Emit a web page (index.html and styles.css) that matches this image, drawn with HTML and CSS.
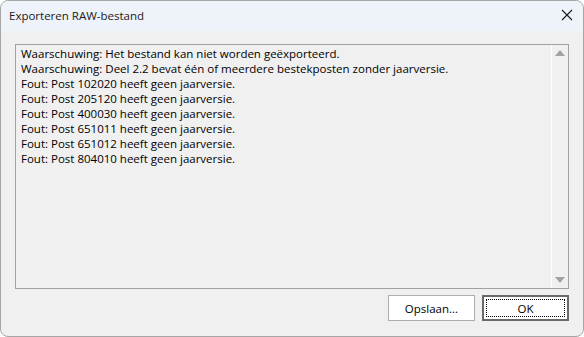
FILE: index.html
```html
<!DOCTYPE html>
<html>
<head>
  <title>Exporteren RAW-bestand</title>
  <link rel="stylesheet" href="styles.css">
</head>
<body>

  <div class="window">
    <div class="titlebar">
      <span class="title">Exporteren RAW-bestand</span>
      <span class="close">
        <svg width="12" height="12" viewBox="0 0 12 12">
          <path d="M1 1 L11 11 M11 1 L1 11" stroke="#1a1a1a" stroke-width="1.1" fill="none"/>
        </svg>
      </span>
    </div>

    <div class="content">
      <div class="log">
        <div class="log-lines">
          <div>Waarschuwing: Het bestand kan niet worden geëxporteerd.</div>
          <div>Waarschuwing: Deel 2.2 bevat één of meerdere bestekposten zonder jaarversie.</div>
          <div>Fout: Post 102020 heeft geen jaarversie.</div>
          <div>Fout: Post 205120 heeft geen jaarversie.</div>
          <div>Fout: Post 400030 heeft geen jaarversie.</div>
          <div>Fout: Post 651011 heeft geen jaarversie.</div>
          <div>Fout: Post 651012 heeft geen jaarversie.</div>
          <div>Fout: Post 804010 heeft geen jaarversie.</div>
        </div>
        <div class="scrollbar">
          <span class="arrow up"></span>
          <span class="arrow down"></span>
        </div>
      </div>

      <div class="buttons">
        <button class="btn">Opslaan...</button>
        <button class="btn default"><span class="focus">OK</span></button>
      </div>
    </div>
  </div>

</body>
</html>
```

FILE: styles.css
```css
html, body {
  margin: 0;
  padding: 0;
  background: #ffffff;
}

body {
  font-family: "Open Sans", "Noto Sans", sans-serif;
  font-size: 11.5px;
  color: #000;
}

.window {
  width: 584px;
  height: 337px;
  box-sizing: border-box;
  border: 1px solid #a6a6a6;
  border-radius: 8px;
  background: #f0f0f0;
  overflow: hidden;
  display: flex;
  flex-direction: column;
}

.titlebar {
  height: 30px;
  background: #eef2f9;
  display: flex;
  align-items: center;
  justify-content: space-between;
  padding: 0 9px 0 8px;
  flex-shrink: 0;
}

.title {
  color: #1a1a1a;
  font-size: 11.5px;
  margin-top: -2px;
}

.close {
  display: flex;
  margin-right: 1px;
  margin-top: -2px;
}

.content {
  flex: 1;
  padding: 13px 14px 15px 14px;
  display: flex;
  flex-direction: column;
  gap: 6px;
}

.log {
  height: 245px;
  box-sizing: border-box;
  border: 1px solid #a0a0a0;
  background: #f0f0f0;
  display: flex;
}

.log-lines {
  flex: 1;
  padding: 1px 5px;
  line-height: 15px;
}

.scrollbar {
  width: 16px;
  border-left: 1px solid #ffffff;
  display: flex;
  flex-direction: column;
  justify-content: space-between;
  align-items: center;
  padding: 5px 0;
}

.arrow {
  width: 0;
  height: 0;
  border-left: 5px solid transparent;
  border-right: 5px solid transparent;
}

.arrow.up { border-bottom: 6px solid #a3a3a3; }
.arrow.down { border-top: 6px solid #a3a3a3; }

.buttons {
  display: flex;
  justify-content: flex-end;
  gap: 7px;
}

.btn {
  width: 87px;
  height: 26px;
  box-sizing: border-box;
  border: 1px solid #adadad;
  background: #ffffff;
  font-family: inherit;
  font-size: 11.5px;
  color: #000;
  padding: 0;
  margin: 0;
}

.btn.default {
  border: 2px solid #6a6a6a;
  padding: 2px;
  display: flex;
}

.focus {
  flex: 1;
  border: 1px dotted #000;
  display: flex;
  align-items: center;
  justify-content: center;
}
```
